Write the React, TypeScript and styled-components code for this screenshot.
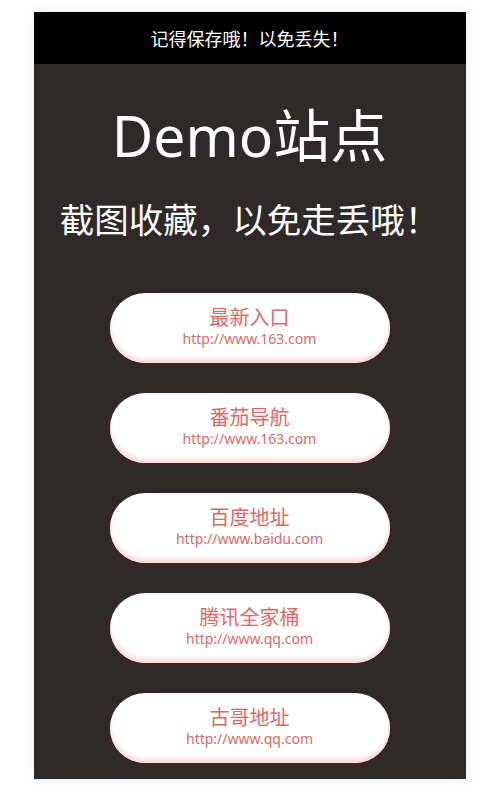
import styled, { createGlobalStyle } from "styled-components";

const GlobalStyle = createGlobalStyle`
  html, body {
    margin: 0;
    padding: 0;
    background: #ffffff;
    font-family: "Noto Sans CJK SC", "Noto Sans", sans-serif;
  }
`;

const links = [
  { name: "最新入口", url: "http://www.163.com" },
  { name: "番茄导航", url: "http://www.163.com" },
  { name: "百度地址", url: "http://www.baidu.com" },
  { name: "腾讯全家桶", url: "http://www.qq.com" },
  { name: "古哥地址", url: "http://www.qq.com" },
];

const Page = styled.div`
  padding: 12px 0 9px 6px;
  display: flex;
  justify-content: center;
`;

const Card = styled.div`
  width: 432px;
  background: #2e2a2a;
  box-shadow: 0 0 12px rgba(0, 0, 0, 0.08);
  display: flex;
  flex-direction: column;
`;

const Notice = styled.div`
  height: 52px;
  background: #000;
  color: #fff;
  font-size: 18px;
  display: flex;
  align-items: center;
  justify-content: center;
`;

const Title = styled.h1`
  margin: 37px 0 0;
  color: #fff;
  font-family: "Noto Sans", "Noto Sans CJK SC", sans-serif;
  font-weight: 400;
  font-size: 57px;
  line-height: 68px;
  text-align: center;
`;

const Subtitle = styled.h2`
  margin: 27px 0 0;
  color: #fff;
  font-weight: 400;
  font-size: 34.5px;
  line-height: 44px;
  text-align: center;
`;

const List = styled.div`
  margin-top: 53px;
  display: flex;
  flex-direction: column;
  align-items: center;
  gap: 30px;
  padding-bottom: 16px;
`;

const LinkButton = styled.a`
  box-sizing: border-box;
  width: 280px;
  height: 70px;
  padding-bottom: 4px;
  border-radius: 35px;
  background: #fff;
  box-shadow: inset 0 -4px 4px #fbd9d9, 0 2px 6px rgba(90, 30, 30, 0.5);
  display: flex;
  flex-direction: column;
  align-items: center;
  justify-content: center;
  text-decoration: none;
  color: #d96a6a;
`;

const Name = styled.span`
  font-size: 20px;
  line-height: 26px;
`;

const Url = styled.span`
  font-family: "Noto Sans", sans-serif;
  font-size: 14px;
  line-height: 18px;
`;

export default function App() {
  return (
    <>
      <GlobalStyle />
      <Page>
        <Card>
          <Notice>记得保存哦！以免丢失！</Notice>
          <Title>Demo站点</Title>
          <Subtitle>截图收藏，以免走丢哦！</Subtitle>
          <List>
            {links.map((l) => (
              <LinkButton key={l.name} href="#">
                <Name>{l.name}</Name>
                <Url>{l.url}</Url>
              </LinkButton>
            ))}
          </List>
        </Card>
      </Page>
    </>
  );
}
